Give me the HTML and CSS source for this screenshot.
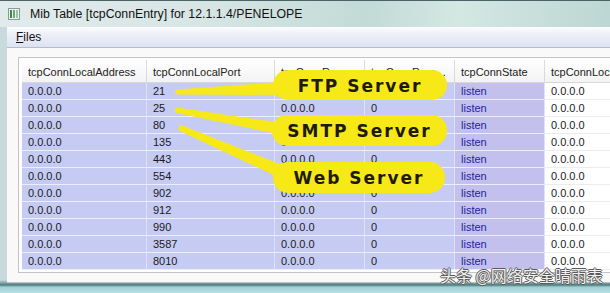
FILE: index.html
```html
<!DOCTYPE html>
<html>
	<head>
		<meta charset="UTF-8">
		<title>Mib Table</title>
		<link rel="stylesheet" href="styles.css">
	</head>
	<body>
		<div id="win">
			<div class="titlebar">
				<svg class="appicon" width="12" height="12" viewBox="0 0 12 12">
					<rect x="0.5" y="0.5" width="11" height="11" fill="#eef2f2" stroke="#8a9a9a"/>
					<rect x="2" y="2" width="2" height="8" fill="#3c8a4a"/>
					<rect x="5" y="2" width="2" height="8" fill="#6aa874"/>
					<rect x="8" y="2" width="2" height="8" fill="#9cc4a2"/>
				</svg>
				<span class="title">Mib Table [tcpConnEntry] for 12.1.1.4/PENELOPE</span>
			</div>
			<div class="frame">
				<div class="menubar"><span class="menu"><u>F</u>iles</span></div>
				<div class="client">
					<div class="panel">
						<div class="row head">
							<div class="cell">tcpConnLocalAddress</div>
							<div class="cell">tcpConnLocalPort</div>
							<div class="cell">tcpConnRemAddress</div>
							<div class="cell">tcpConnRemPort</div>
							<div class="cell">tcpConnState</div>
							<div class="cell">tcpConnLocalAddress</div>
						</div>
						<div id="rows"></div>
					</div>
				</div>
			</div>

			<svg class="arrows" width="610" height="293" viewBox="0 0 610 293">
				<path d="M177 89.5 Q173 91.8 177 94.5 L282 95 L282 82 Z" fill="#f7e818"/>
				<path d="M177 107.5 Q172.5 110 177 113 L282 135 L282 123 Z" fill="#f7e818"/>
				<path d="M181 125 Q176.5 127.5 180 131 L282 179 L282 165 Z" fill="#f7e818"/>
			</svg>
			<div class="pill ftp">FTP Server</div>
			<div class="pill smtp">SMTP Server</div>
			<div class="pill web">Web Server</div>

			<div class="mark">头条 @网络安全晴雨表</div>
		</div>

<script type="text/javascript">
	var ports = [21,25,80,135,443,554,902,912,990,3587,8010];
	var html = '';
	ports.forEach(function(p){
		html += '<div class="row">'
			+ '<div class="cell">0.0.0.0</div>'
			+ '<div class="cell">' + p + '</div>'
			+ '<div class="cell">0.0.0.0</div>'
			+ '<div class="cell">0</div>'
			+ '<div class="cell state">listen</div>'
			+ '<div class="cell plain">0.0.0.0</div>'
			+ '</div>';
	});
	document.getElementById('rows').innerHTML = html;
</script>
	</body>
</html>
```

FILE: styles.css
```css
*{margin: 0;padding: 0;box-sizing: border-box;}
body{font-family: "Liberation Sans", Arial, sans-serif;background: #fff;}
#win{
	width: 610px;
	height: 293px;
	position: relative;
	overflow: hidden;
	background: linear-gradient(to bottom, #c9dadc 0, #c9dadc 280px, #4f7b7e 285px, #9fd0d4 287px, #b8e2e4 293px);
}
.titlebar{
	height: 27px;
	display: flex;
	align-items: center;
	padding-left: 8px;
	border-top: 1px solid #4a6466;
	background: linear-gradient(100deg, #e2ebeb 0, #d6e5e4 35%, #c2dbd7 60%, #d4e7e3 75%, #bcd7d3 100%);
}
.appicon{margin-right: 10px;}
.title{
	font-size: 12.3px;
	color: #111;
}
.frame{
	margin-left: 7px;
	height: 256px;
	background: #f2f2f2;
	border-bottom: 1px solid #b9c4c6;
}
.menubar{
	height: 21px;
	padding-left: 9px;
	background: linear-gradient(to bottom, #fdfdfe 0, #f0f2f9 30%, #dde2f1 100%);
	border-bottom: 1px solid #b4bccf;
	display: flex;
	align-items: center;
}
.menu{font-size: 12px;color: #111;}
.client{
	height: 234px;
	padding-top: 9px;
	background: #f9f9f9;
	overflow: hidden;
}
.panel{
	margin-left: 11px;
	width: 700px;
	border: 1px solid #c4c4c4;
	border-right: 0;
	padding: 2px 0 2px 3px;
	background: #fff;
}
.row{
	display: grid;
	grid-template-columns: 125px 128px 90px 90px 90px 120px;
	height: 17px;
	font-size: 11px;
	line-height: 16px;
	color: #1a1a1a;
}
.cell{
	padding-left: 6px;
	white-space: nowrap;
	overflow: hidden;
	text-overflow: ellipsis;
	background: #c6cbf3;
	border-right: 1px solid #dfe2fa;
	border-bottom: 1px solid #eceefb;
}
.cell.state{
	background: #c3c0ee;
	color: #24249a;
}
.cell.plain{
	background: #fff;
	border-bottom-color: #ececec;
}
.row.head{
	height: 23px;
	line-height: 24px;
	color: #222;
}
.row.head .cell{
	background: linear-gradient(to bottom, #ffffff, #f3f3f3);
	border-right: 1px solid #dadada;
	border-bottom: 1px solid #d8d8d8;
	padding-right: 4px;
}
.arrows{
	position: absolute;
	left: 0;
	top: 0;
}
.pill{
	position: absolute;
	left: 273px;
	width: 174px;
	height: 30px;
	border-radius: 15px;
	background: #f7e818;
	font-family: "DejaVu Sans", Verdana, sans-serif;
	font-weight: bold;
	font-size: 17px;
	letter-spacing: 2px;
	color: #1d1a08;
	display: flex;
	align-items: center;
	justify-content: center;
	padding-top: 1px;
}
.pill.ftp{top: 70px;height: 30px;}
.pill.smtp{top: 115px;height: 31px;left: 272px;width: 175px;}
.pill.web{top: 162px;height: 31px;width: 172px;}
.mark{
	position: absolute;
	left: 440px;
	top: 265px;
	font-family: "Noto Sans CJK SC", sans-serif;
	font-size: 16px;
	line-height: 20px;
	color: #f2f2f2;
	text-shadow: 1px 0 0 #5a5a5a, -1px 0 0 #5a5a5a, 0 1px 0 #5a5a5a, 0 -1px 0 #5a5a5a;
}
```
